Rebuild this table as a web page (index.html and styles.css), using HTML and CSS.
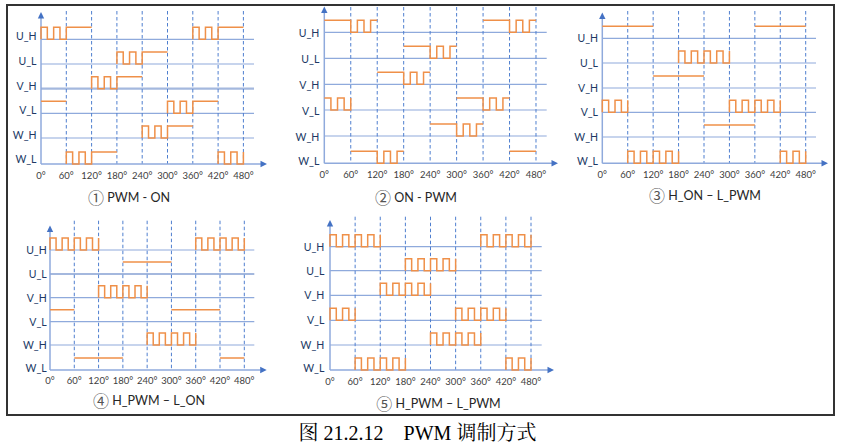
FILE: index.html
```html
<!DOCTYPE html>
<html lang="zh">
<head>
<meta charset="utf-8">
<title>PWM 调制方式</title>
<link rel="stylesheet" href="styles.css">
</head>
<body>
<div class="frame">
  <div class="row row-top">
    <figure class="panel p1">
      <svg class="chart" width="275" height="182" viewBox="8 6 275 182">
        <g class="grid">
          <line x1="41" x2="254" y1="39.3" y2="39.3"/>
          <line x1="41" x2="254" y1="64" y2="64"/>
          <line class="thick" x1="41" x2="254" y1="88.7" y2="88.7"/>
          <line x1="41" x2="254" y1="113.3" y2="113.3"/>
          <line x1="41" x2="254" y1="138" y2="138"/>
        </g>
        <g class="dash" transform="translate(41,0) scale(0.42167,1)">
          <line x1="60" x2="60" y1="11" y2="164"/><line x1="120" x2="120" y1="11" y2="164"/>
          <line x1="180" x2="180" y1="11" y2="164"/><line x1="240" x2="240" y1="11" y2="164"/>
          <line x1="300" x2="300" y1="11" y2="164"/><line x1="360" x2="360" y1="11" y2="164"/>
          <line x1="420" x2="420" y1="11" y2="164"/><line x1="480" x2="480" y1="11" y2="164"/>
        </g>
        <line class="axis" x1="41" y1="15" x2="41" y2="164"/>
        <line class="axis" x1="41" y1="164" x2="262" y2="164"/>
        <polygon class="arrow" points="37.8,18.5 41,12 44.2,18.5"/>
        <polygon class="arrow" points="260.5,160.8 267,164 260.5,167.2"/>
        <g class="wave" transform="translate(41,0) scale(0.42167,1)">
          <path transform="translate(0,39.3)" d="M0,0v-12h15v12h15v-12h15v12h15v-12h60M360,0v-12h15v12h15v-12h15v12h15v-12h60"/>
          <path transform="translate(0,64)" d="M180,0v-12h15v12h15v-12h15v12h15v-12h60"/>
          <path transform="translate(0,88.7)" d="M120,0v-12h15v12h15v-12h15v12h15v-12h60"/>
          <path transform="translate(0,113.3)" d="M0,-12h60M300,0v-12h15v12h15v-12h15v12h15v-12h60"/>
          <path transform="translate(0,138)" d="M240,0v-12h15v12h15v-12h15v12h15v-12h60"/>
          <path transform="translate(0,164)" d="M60,0v-12h15v12h15v-12h15v12h15v-12h60M420,0v-12h15v12h15v-12h15v12h15v-12"/>
        </g>
        <g class="lbl">
          <text x="36.5" y="36.3">U_H</text><text x="36.5" y="61">U_L</text>
          <text x="36.5" y="85.7">V_H</text><text x="36.5" y="110.3">V_L</text>
          <text x="36.5" y="135">W_H</text><text x="36.5" y="158.5">W_L</text>
        </g>
        <g class="deg">
          <text x="41" y="178.5">0°</text><text x="66.3" y="178.5">60°</text>
          <text x="91.6" y="178.5">120°</text><text x="116.9" y="178.5">180°</text>
          <text x="142.2" y="178.5">240°</text><text x="167.5" y="178.5">300°</text>
          <text x="192.8" y="178.5">360°</text><text x="218.1" y="178.5">420°</text>
          <text x="243.4" y="178.5">480°</text>
        </g>
      </svg>
      <figcaption><span class="no">①</span> PWM - ON</figcaption>
    </figure>

    <figure class="panel p2">
      <svg class="chart" width="280" height="182" viewBox="283 6 280 182">
        <g class="grid">
          <line x1="324.3" x2="546.7" y1="32.3" y2="32.3"/>
          <line x1="324.3" x2="546.7" y1="58.3" y2="58.3"/>
          <line x1="324.3" x2="546.7" y1="84.3" y2="84.3"/>
          <line x1="324.3" x2="546.7" y1="110" y2="110"/>
          <line x1="324.3" x2="546.7" y1="136" y2="136"/>
        </g>
        <g class="dash" transform="translate(324.3,0) scale(0.44104,1)">
          <line x1="60" x2="60" y1="7" y2="163.3"/><line x1="120" x2="120" y1="7" y2="163.3"/>
          <line x1="180" x2="180" y1="7" y2="163.3"/><line x1="240" x2="240" y1="7" y2="163.3"/>
          <line x1="300" x2="300" y1="7" y2="163.3"/><line x1="360" x2="360" y1="7" y2="163.3"/>
          <line x1="420" x2="420" y1="7" y2="163.3"/><line x1="480" x2="480" y1="7" y2="163.3"/>
        </g>
        <line class="axis" x1="324.3" y1="10" x2="324.3" y2="163.3"/>
        <line class="axis" x1="324.3" y1="163.3" x2="552" y2="163.3"/>
        <polygon class="arrow" points="321.1,13 324.3,6.5 327.5,13"/>
        <polygon class="arrow" points="551.5,160.1 558,163.3 551.5,166.5"/>
        <g class="wave" transform="translate(324.3,0) scale(0.44104,1)">
          <path transform="translate(0,32.3)" d="M0,-12h60v12h15v-12h15v12h15v-12h15M360,-12h60v12h15v-12h15v12h15v-12h15"/>
          <path transform="translate(0,58.3)" d="M180,-12h60v12h15v-12h15v12h15v-12h15"/>
          <path transform="translate(0,84.3)" d="M120,-12h60v12h15v-12h15v12h15v-12h15"/>
          <path transform="translate(0,110)" d="M0,-12h15v12h15v-12h15v12h15v-12M300,-12h60v12h15v-12h15v12h15v-12h15"/>
          <path transform="translate(0,136)" d="M240,-12h60v12h15v-12h15v12h15v-12h15"/>
          <path transform="translate(0,163.3)" d="M60,-12h60v12h15v-12h15v12h15v-12h15M420,-12h60"/>
        </g>
        <g class="lbl">
          <text x="319.3" y="33.3">U_H</text><text x="319.3" y="59.3">U_L</text>
          <text x="319.3" y="85.3">V_H</text><text x="319.3" y="111">V_L</text>
          <text x="319.3" y="137">W_H</text><text x="319.3" y="160.8">W_L</text>
        </g>
        <g class="deg">
          <text x="324.3" y="177.8">0°</text><text x="350.8" y="177.8">60°</text>
          <text x="377.2" y="177.8">120°</text><text x="403.7" y="177.8">180°</text>
          <text x="430.2" y="177.8">240°</text><text x="456.6" y="177.8">300°</text>
          <text x="483.1" y="177.8">360°</text><text x="509.5" y="177.8">420°</text>
          <text x="536" y="177.8">480°</text>
        </g>
      </svg>
      <figcaption><span class="no">②</span> ON - PWM</figcaption>
    </figure>

    <figure class="panel p3">
      <svg class="chart" width="270" height="182" viewBox="563 6 270 182">
        <g class="grid">
          <line x1="602.3" x2="816" y1="38.3" y2="38.3"/>
          <line x1="602.3" x2="816" y1="63" y2="63"/>
          <line x1="602.3" x2="816" y1="88" y2="88"/>
          <line x1="602.3" x2="816" y1="112.3" y2="112.3"/>
          <line x1="602.3" x2="816" y1="137" y2="137"/>
        </g>
        <g class="dash" transform="translate(602.3,0) scale(0.42375,1)">
          <line x1="60" x2="60" y1="11" y2="163.3"/><line x1="120" x2="120" y1="11" y2="163.3"/>
          <line x1="180" x2="180" y1="11" y2="163.3"/><line x1="240" x2="240" y1="11" y2="163.3"/>
          <line x1="300" x2="300" y1="11" y2="163.3"/><line x1="360" x2="360" y1="11" y2="163.3"/>
          <line x1="420" x2="420" y1="11" y2="163.3"/><line x1="480" x2="480" y1="11" y2="163.3"/>
        </g>
        <line class="axis" x1="602.3" y1="15" x2="602.3" y2="163.3"/>
        <line class="axis" x1="602.3" y1="163.3" x2="822" y2="163.3"/>
        <polygon class="arrow" points="599.1,19 602.3,12.5 605.5,19"/>
        <polygon class="arrow" points="821.5,160.1 828,163.3 821.5,166.5"/>
        <g class="wave" transform="translate(602.3,0) scale(0.42375,1)">
          <path transform="translate(0,38.3)" d="M0,-12h120M360,-12h120"/>
          <path transform="translate(0,63)" d="M180,0v-12h15v12h15v-12h15v12h15v-12h15v12h15v-12h15v12h15v-12"/>
          <path transform="translate(0,88)" d="M120,-12h120"/>
          <path transform="translate(0,112.3)" d="M0,0v-12h15v12h15v-12h15v12h15v-12M300,0v-12h15v12h15v-12h15v12h15v-12h15v12h15v-12h15v12h15v-12"/>
          <path transform="translate(0,137)" d="M240,-12h120"/>
          <path transform="translate(0,163.3)" d="M60,0v-12h15v12h15v-12h15v12h15v-12h15v12h15v-12h15v12h15v-12M420,0v-12h15v12h15v-12h15v12h15v-12"/>
        </g>
        <g class="lbl">
          <text x="598" y="38.3">U_H</text><text x="598" y="63">U_L</text>
          <text x="598" y="88">V_H</text><text x="598" y="112.3">V_L</text>
          <text x="598" y="137">W_H</text><text x="598" y="160.8">W_L</text>
        </g>
        <g class="deg">
          <text x="602.3" y="177.8">0°</text><text x="627.7" y="177.8">60°</text>
          <text x="653.2" y="177.8">120°</text><text x="678.6" y="177.8">180°</text>
          <text x="704" y="177.8">240°</text><text x="729.4" y="177.8">300°</text>
          <text x="754.9" y="177.8">360°</text><text x="780.3" y="177.8">420°</text>
          <text x="805.7" y="177.8">480°</text>
        </g>
      </svg>
      <figcaption><span class="no">③</span> H_ON – L_PWM</figcaption>
    </figure>
  </div>

  <div class="row row-bottom">
    <figure class="panel p4">
      <svg class="chart" width="275" height="182" viewBox="8 208 275 182">
        <g class="grid">
          <line x1="50" x2="254.3" y1="250" y2="250"/>
          <line class="thick" x1="50" x2="254.3" y1="274" y2="274"/>
          <line x1="50" x2="254.3" y1="297.7" y2="297.7"/>
          <line x1="50" x2="254.3" y1="321.7" y2="321.7"/>
          <line x1="50" x2="254.3" y1="345" y2="345"/>
        </g>
        <g class="dash" transform="translate(50,0) scale(0.40479,1)">
          <line x1="60" x2="60" y1="220.7" y2="370"/><line x1="120" x2="120" y1="220.7" y2="370"/>
          <line x1="180" x2="180" y1="220.7" y2="370"/><line x1="240" x2="240" y1="220.7" y2="370"/>
          <line x1="300" x2="300" y1="220.7" y2="370"/><line x1="360" x2="360" y1="220.7" y2="370"/>
          <line x1="420" x2="420" y1="220.7" y2="370"/><line x1="480" x2="480" y1="220.7" y2="370"/>
        </g>
        <line class="axis" x1="50" y1="229" x2="50" y2="370"/>
        <line class="axis" x1="50" y1="370" x2="260.5" y2="370"/>
        <polygon class="arrow" points="46.8,232 50,225.5 53.2,232"/>
        <polygon class="arrow" points="260.2,366.8 266.7,370 260.2,373.2"/>
        <g class="wave" transform="translate(50,0) scale(0.40479,1)">
          <path transform="translate(0,250)" d="M0,0v-12h15v12h15v-12h15v12h15v-12h15v12h15v-12h15v12h15v-12M360,0v-12h15v12h15v-12h15v12h15v-12h15v12h15v-12h15v12h15v-12"/>
          <path transform="translate(0,274)" d="M180,-12h120"/>
          <path transform="translate(0,297.7)" d="M120,0v-12h15v12h15v-12h15v12h15v-12h15v12h15v-12h15v12h15v-12"/>
          <path transform="translate(0,321.7)" d="M0,-12h60M300,-12h120"/>
          <path transform="translate(0,345)" d="M240,0v-12h15v12h15v-12h15v12h15v-12h15v12h15v-12h15v12h15v-12"/>
          <path transform="translate(0,370)" d="M60,-12h120M420,-12h60"/>
        </g>
        <g class="lbl">
          <text x="46.7" y="250">U_H</text><text x="46.7" y="274">U_L</text>
          <text x="46.7" y="297.7">V_H</text><text x="46.7" y="321.7">V_L</text>
          <text x="46.7" y="345">W_H</text><text x="46.7" y="367.5">W_L</text>
        </g>
        <g class="deg">
          <text x="50" y="384.2">0°</text><text x="74.3" y="384.2">60°</text>
          <text x="98.6" y="384.2">120°</text><text x="122.9" y="384.2">180°</text>
          <text x="147.2" y="384.2">240°</text><text x="171.4" y="384.2">300°</text>
          <text x="195.7" y="384.2">360°</text><text x="220" y="384.2">420°</text>
          <text x="244.3" y="384.2">480°</text>
        </g>
      </svg>
      <figcaption><span class="no">④</span> H_PWM – L_ON</figcaption>
    </figure>

    <figure class="panel p5">
      <svg class="chart" width="280" height="182" viewBox="283 208 280 182">
        <g class="grid">
          <line x1="330" x2="541.7" y1="246.7" y2="246.7"/>
          <line x1="330" x2="541.7" y1="270.7" y2="270.7"/>
          <line x1="330" x2="541.7" y1="295.3" y2="295.3"/>
          <line x1="330" x2="541.7" y1="320.3" y2="320.3"/>
          <line x1="330" x2="541.7" y1="345" y2="345"/>
        </g>
        <g class="dash" transform="translate(330,0) scale(0.41875,1)">
          <line x1="60" x2="60" y1="216.7" y2="370"/><line x1="120" x2="120" y1="216.7" y2="370"/>
          <line x1="180" x2="180" y1="216.7" y2="370"/><line x1="240" x2="240" y1="216.7" y2="370"/>
          <line x1="300" x2="300" y1="216.7" y2="370"/><line x1="360" x2="360" y1="216.7" y2="370"/>
          <line x1="420" x2="420" y1="216.7" y2="370"/><line x1="480" x2="480" y1="216.7" y2="370"/>
        </g>
        <line class="axis" x1="330" y1="223" x2="330" y2="370"/>
        <line class="axis" x1="330" y1="370" x2="548" y2="370"/>
        <polygon class="arrow" points="326.8,226.5 330,220 333.2,226.5"/>
        <polygon class="arrow" points="547.5,366.8 554,370 547.5,373.2"/>
        <g class="wave" transform="translate(330,0) scale(0.41875,1)">
          <path transform="translate(0,246.7)" d="M0,0v-12h15v12h15v-12h15v12h15v-12h15v12h15v-12h15v12h15v-12M360,0v-12h15v12h15v-12h15v12h15v-12h15v12h15v-12h15v12h15v-12"/>
          <path transform="translate(0,270.7)" d="M180,0v-12h15v12h15v-12h15v12h15v-12h15v12h15v-12h15v12h15v-12"/>
          <path transform="translate(0,295.3)" d="M120,0v-12h15v12h15v-12h15v12h15v-12h15v12h15v-12h15v12h15v-12"/>
          <path transform="translate(0,320.3)" d="M0,0v-12h15v12h15v-12h15v12h15v-12M300,0v-12h15v12h15v-12h15v12h15v-12h15v12h15v-12h15v12h15v-12"/>
          <path transform="translate(0,345)" d="M240,0v-12h15v12h15v-12h15v12h15v-12h15v12h15v-12h15v12h15v-12"/>
          <path transform="translate(0,370)" d="M60,0v-12h15v12h15v-12h15v12h15v-12h15v12h15v-12h15v12h15v-12M420,0v-12h15v12h15v-12h15v12h15v-12"/>
        </g>
        <g class="lbl">
          <text x="324.3" y="246.7">U_H</text><text x="324.3" y="270.7">U_L</text>
          <text x="324.3" y="295.3">V_H</text><text x="324.3" y="320.3">V_L</text>
          <text x="324.3" y="345">W_H</text><text x="324.3" y="367.5">W_L</text>
        </g>
        <g class="deg">
          <text x="330" y="384.5">0°</text><text x="355.1" y="384.5">60°</text>
          <text x="380.3" y="384.5">120°</text><text x="405.4" y="384.5">180°</text>
          <text x="430.5" y="384.5">240°</text><text x="455.6" y="384.5">300°</text>
          <text x="480.8" y="384.5">360°</text><text x="505.9" y="384.5">420°</text>
          <text x="531" y="384.5">480°</text>
        </g>
      </svg>
      <figcaption><span class="no">⑤</span> H_PWM – L_PWM</figcaption>
    </figure>
  </div>
</div>
<p class="fig-caption">图 21.2.12&emsp;PWM 调制方式</p>
</body>
</html>
```

FILE: styles.css
```css
html, body {
  margin: 0;
  padding: 0;
  background: #ffffff;
  overflow: hidden;
}

body {
  font-family: Lato, "Noto Sans CJK SC", sans-serif;
  color: #222222;
}

.frame {
  box-sizing: border-box;
  width: 829px;
  height: 412px;
  margin: 4px 0 0 6px;
  border: 2px solid #333333;
}

.row {
  display: flex;
}

.row-top {
  height: 202px;
}

.panel {
  margin: 0;
  display: flex;
  flex-direction: column;
}

.p1, .p4 { width: 275px; }
.p2, .p5 { width: 280px; }
.p3 { width: 270px; }

.chart {
  display: block;
  overflow: visible;
}

.panel figcaption {
  font-family: Lato, "Noto Sans CJK SC", sans-serif;
  font-size: 12.5px;
  line-height: 16px;
  color: #262626;
  text-align: center;
  white-space: nowrap;
}

.panel figcaption .no {
  font-family: "Noto Sans CJK SC", "DejaVu Sans", sans-serif;
  font-size: 16px;
  line-height: 10px;
  color: #555555;
  vertical-align: -1.5px;
}

.p1 figcaption { margin-top: 2px; padding-right: 33px; }
.p2 figcaption { margin-top: 2px; padding-right: 14px; }
.p3 figcaption { margin-top: 0; padding-left: 14px; }
.p4 figcaption { margin-top: 3px; padding-left: 7px; }
.p5 figcaption { margin-top: 6px; padding-left: 31px; }

/* chart parts */
.grid line {
  stroke: #8faadc;
  stroke-width: 1.2;
}

.grid .thick {
  stroke: #a4b8de;
  stroke-width: 2.2;
}

.axis {
  stroke: #8faadc;
  stroke-width: 1.5;
}

.arrow {
  fill: #4472c4;
}

.dash line {
  stroke: #4f7fcf;
  stroke-width: 1;
  stroke-dasharray: 3.5 2.5;
  vector-effect: non-scaling-stroke;
}

.wave path {
  fill: none;
  stroke: #ef9049;
  stroke-width: 1.5;
  stroke-linejoin: miter;
  vector-effect: non-scaling-stroke;
}

.lbl text {
  font-family: Lato, sans-serif;
  font-size: 10.5px;
  fill: #203864;
  text-anchor: end;
  dominant-baseline: central;
}

.deg text {
  font-family: Lato, sans-serif;
  font-size: 9.5px;
  fill: #404040;
  text-anchor: middle;
}

.fig-caption {
  margin: 8px 0 0;
  padding-right: 9px;
  font-family: "Liberation Serif", "Noto Serif CJK SC", "Noto Sans CJK SC", serif;
  font-size: 20px;
  line-height: 18px;
  color: #000000;
  text-align: center;
  white-space: nowrap;
}
```
